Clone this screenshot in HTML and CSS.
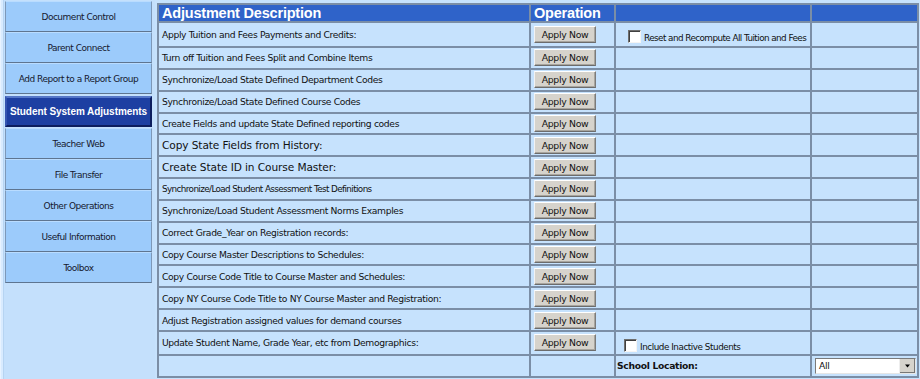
FILE: index.html
```html
<!DOCTYPE html>
<html>
<head>
  <title>Student System Adjustments</title>
  <link rel="stylesheet" href="styles.css">
</head>
<body>
  <div class="page">
    <div class="sidebar">
      <div class="nav-btn">Document Control</div>
      <div class="nav-btn">Parent Connect</div>
      <div class="nav-btn">Add Report to a Report Group</div>
      <div class="nav-btn active">Student System Adjustments</div>
      <div class="nav-btn">Teacher Web</div>
      <div class="nav-btn">File Transfer</div>
      <div class="nav-btn">Other Operations</div>
      <div class="nav-btn">Useful Information</div>
      <div class="nav-btn">Toolbox</div>
    </div>

    <table class="adjust">
      <colgroup>
        <col class="c-desc">
        <col class="c-op">
        <col class="c-opt">
        <col class="c-extra">
      </colgroup>
      <tr class="head">
        <th>Adjustment Description</th>
        <th>Operation</th>
        <th></th>
        <th></th>
      </tr>
      <tr class="tall">
        <td>Apply Tuition and Fees Payments and Credits:</td>
        <td><button class="apply">Apply Now</button></td>
        <td><label class="check"><span class="box"></span>Reset and Recompute All Tuition and Fees</label></td>
        <td></td>
      </tr>
      <tr>
        <td>Turn off Tuition and Fees Split and Combine Items</td>
        <td><button class="apply">Apply Now</button></td>
        <td></td><td></td>
      </tr>
      <tr>
        <td>Synchronize/Load State Defined Department Codes</td>
        <td><button class="apply">Apply Now</button></td>
        <td></td><td></td>
      </tr>
      <tr>
        <td>Synchronize/Load State Defined Course Codes</td>
        <td><button class="apply">Apply Now</button></td>
        <td></td><td></td>
      </tr>
      <tr>
        <td>Create Fields and update State Defined reporting codes</td>
        <td><button class="apply">Apply Now</button></td>
        <td></td><td></td>
      </tr>
      <tr>
        <td class="big">Copy State Fields from History:</td>
        <td><button class="apply">Apply Now</button></td>
        <td></td><td></td>
      </tr>
      <tr>
        <td class="big">Create State ID in Course Master:</td>
        <td><button class="apply">Apply Now</button></td>
        <td></td><td></td>
      </tr>
      <tr>
        <td class="small">Synchronize/Load Student Assessment Test Definitions</td>
        <td><button class="apply">Apply Now</button></td>
        <td></td><td></td>
      </tr>
      <tr>
        <td>Synchronize/Load Student Assessment Norms Examples</td>
        <td><button class="apply">Apply Now</button></td>
        <td></td><td></td>
      </tr>
      <tr>
        <td>Correct Grade_Year on Registration records:</td>
        <td><button class="apply">Apply Now</button></td>
        <td></td><td></td>
      </tr>
      <tr>
        <td>Copy Course Master Descriptions to Schedules:</td>
        <td><button class="apply">Apply Now</button></td>
        <td></td><td></td>
      </tr>
      <tr>
        <td>Copy Course Code Title to Course Master and Schedules:</td>
        <td><button class="apply">Apply Now</button></td>
        <td></td><td></td>
      </tr>
      <tr>
        <td>Copy NY Course Code Title to NY Course Master and Registration:</td>
        <td><button class="apply">Apply Now</button></td>
        <td></td><td></td>
      </tr>
      <tr>
        <td>Adjust Registration assigned values for demand courses</td>
        <td><button class="apply">Apply Now</button></td>
        <td></td><td></td>
      </tr>
      <tr class="mid">
        <td>Update Student Name, Grade Year, etc from Demographics:</td>
        <td><button class="apply">Apply Now</button></td>
        <td><label class="check low"><span class="box"></span>Include Inactive Students</label></td>
        <td></td>
      </tr>
      <tr>
        <td></td>
        <td></td>
        <td class="loc">School Location:</td>
        <td>
          <div class="select">
            <span class="value">All</span>
            <span class="arrow">
              <svg width="7" height="4" viewBox="0 0 7 4"><path d="M1 0.5h5L3.5 3.5z" fill="#000"/></svg>
            </span>
          </div>
        </td>
      </tr>
    </table>
  </div>
</body>
</html>
```

FILE: styles.css
```css
body {
  margin: 0;
  background: #c6e2fd;
  font-family: "DejaVu Sans", Verdana, sans-serif;
  font-size: 10px;
  color: #111;
}

.page {
  display: flex;
  align-items: flex-start;
  height: 379px;
  overflow: hidden;
}

/* left menu */
.sidebar {
  width: 147px;
  height: 379px;
  flex-shrink: 0;
  padding: 1px 3px 0 4px;
  border-left: 1px solid #e8f3ff;
  box-shadow: inset 2px 0 0 #d8ebff, inset 3px 0 0 #b6d4f2;
  background: #c4e0fc;
}

.nav-btn {
  height: 29px;
  display: flex;
  align-items: center;
  justify-content: center;
  white-space: nowrap;
  background: #9ccbfb;
  border: 1px solid #7d98b8;
  border-top-color: #b9dcff;
  border-bottom: 1px solid #5e7590;
  font-size: 9px;
  color: #15182e;
  font-family: "DejaVu Sans", Verdana, sans-serif;
  letter-spacing: -0.5px;
}

.nav-btn.active {
  height: 27px;
  margin: 2px 0 1px;
  background: #1d3fa2;
  border: 2px solid #0c1d5e;
  border-top-color: #5577c8;
  border-left-color: #3555b0;
  color: #fff;
  font-family: "Liberation Sans", Arial, sans-serif;
  font-size: 10px;
  font-weight: bold;
  letter-spacing: -0.05px;
}

/* adjustments table */
.adjust {
  margin: 3px 0 0 2px;
  width: 760px;
  border-collapse: collapse;
  border: 2px solid #5b6b80;
  background: #c6e2fd;
  table-layout: fixed;
}

.c-desc { width: 372px; }
.c-op { width: 85px; }
.c-opt { width: 196px; }
.c-extra { width: 107px; }

.adjust th,
.adjust td {
  border: 2px solid #7b8ea6;
  padding: 0 0 0 3px;
  height: 19.85px;
  text-align: left;
  white-space: nowrap;
  overflow: hidden;
}

.adjust td {
  font-family: "DejaVu Sans", Verdana, sans-serif;
  font-size: 9.2px;
  letter-spacing: -0.35px;
}

.adjust .head th {
  height: 15px;
  background: #2f63c9;
  color: #fff;
  font-family: "Liberation Sans", Arial, sans-serif;
  font-size: 14.5px;
  font-weight: bold;
  letter-spacing: -0.2px;
  padding-left: 3px;
}

.adjust tr.tall td { height: 23px; }
.adjust tr.mid td { height: 22px; }

.adjust td.big {
  font-size: 10.6px;
  letter-spacing: -0.1px;
}

.adjust td.small {
  font-size: 8.8px;
  letter-spacing: -0.6px;
}

.apply {
  width: 62px;
  height: 17px;
  margin: 0;
  padding: 0;
  background: #d6d3cc;
  border: 1px solid;
  border-color: #fff #7b7b7b #6c6c6c #f2f2f2;
  box-shadow: inset -1px -1px 0 #a8a59e;
  font-family: "DejaVu Sans", Verdana, sans-serif;
  font-size: 9.3px;
  letter-spacing: -0.3px;
  color: #111;
}

.check {
  display: flex;
  align-items: flex-end;
  gap: 3px;
  padding-left: 9px;
  padding-top: 3px;
  font-size: 8.8px;
  letter-spacing: -0.55px;
}

.check.low {
  padding-left: 5px;
  padding-top: 5px;
  letter-spacing: -0.45px;
}

.box {
  flex-shrink: 0;
  width: 11px;
  height: 11px;
  background: #fff;
  border: 1px solid;
  border-color: #6e6e6e #f4f4f4 #f4f4f4 #6e6e6e;
  box-shadow: inset 1px 1px 0 #404040;
}

.adjust td.loc {
  font-weight: bold;
  letter-spacing: -0.3px;
  padding-left: 1px;
}

.select {
  display: flex;
  width: 99px;
  height: 14px;
  background: #fff;
  border: 1px solid;
  border-color: #7a7a7a #e6e6e6 #e6e6e6 #7a7a7a;
}

.select .value {
  flex: 1;
  padding-left: 3px;
  line-height: 14px;
}

.select .arrow {
  width: 15px;
  display: flex;
  align-items: center;
  justify-content: center;
  background: #d6d3cc;
  border-left: 1px solid #eee;
  box-shadow: inset -1px -1px 0 #777;
}
```
